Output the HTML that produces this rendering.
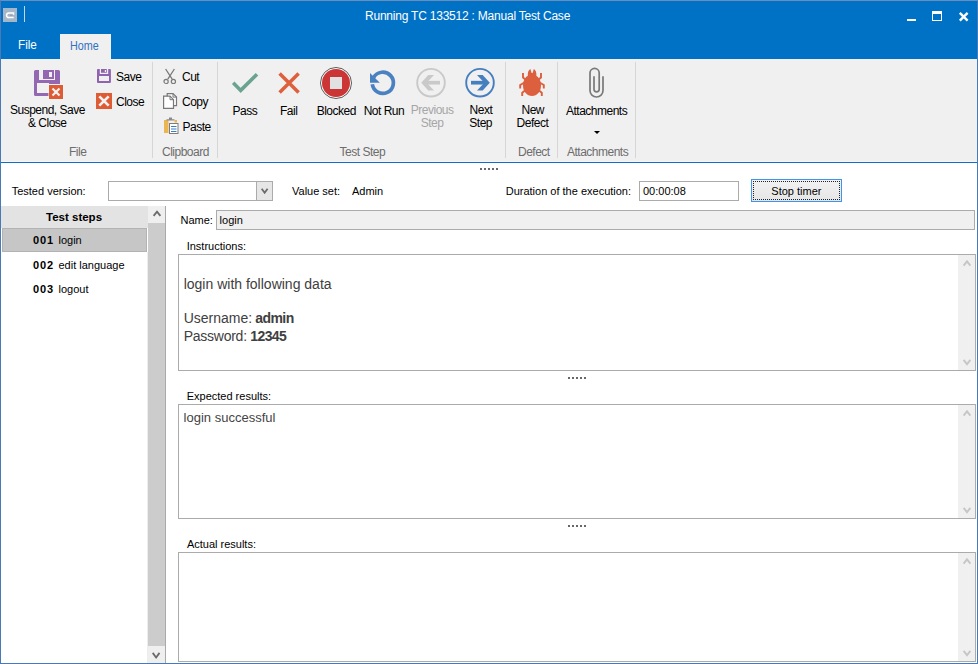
<!DOCTYPE html>
<html><head><meta charset="utf-8">
<style>
*{margin:0;padding:0;box-sizing:border-box}
html,body{width:978px;height:664px;overflow:hidden;background:#fff}
body{position:relative;font-family:"Liberation Sans",sans-serif;color:#000}
.a{position:absolute}
.t{position:absolute;white-space:nowrap;line-height:1}
svg{position:absolute;overflow:visible}
.rb{font-size:12px;letter-spacing:-0.5px;color:#000}
.gl{font-size:12px;letter-spacing:-0.5px;color:#6d6d6d}
.dis{color:#a6a6a6}
.sep{position:absolute;top:62px;width:1px;height:96px;background:#d6d6d6}
.lb{font-size:11px;color:#000}
.dots{position:absolute;width:18px;height:2px;background:repeating-linear-gradient(90deg,#686868 0 2px,transparent 2px 4px)}
.box{position:absolute;border:1px solid #ababab;background:#fff}
.vs{position:absolute;background:#f0f0f0}
</style></head><body>
<!-- window frame -->
<div class="a" style="left:0;top:0;width:978px;height:664px;border:1px solid #477ab6;border-top-color:#6a8dbb"></div>
<!-- title bar + tab row -->
<div class="a" style="left:1px;top:1px;width:976px;height:58px;background:#0072c6"></div>
<div class="a" style="left:3px;top:8px;width:14px;height:14px;background:#a6b6c9"></div>
<svg style="left:3px;top:8px" width="14" height="14"><path d="M10.7 9.6 H5.9 A2.35 2.35 0 0 1 5.9 4.9 H10.5 V6.8" fill="none" stroke="#fff" stroke-width="1.5"/><path d="M7 7.3 H9.8" stroke="#8fa1b4" stroke-width="1.1"/></svg>
<div class="a" style="left:24px;top:6px;width:1px;height:16px;background:#c2d6ec"></div>
<div class="t" style="left:365px;top:10.2px;font-size:12px;letter-spacing:-0.22px;color:#fff">Running TC 133512 : Manual Test Case</div>
<!-- window controls -->
<div class="a" style="left:907px;top:19px;width:9px;height:2px;background:#fff"></div>
<div class="a" style="left:932px;top:11px;width:10px;height:10px;border:1px solid #fff;border-top-width:3px"></div>
<svg style="left:959px;top:12px" width="10" height="10"><path d="M0.8 0.8 L8.6 8.6 M8.6 0.8 L0.8 8.6" stroke="#fff" stroke-width="2.4"/></svg>
<!-- tabs -->
<div class="t" style="left:18px;top:38.2px;font-size:13px;transform:scaleX(0.9);transform-origin:0 0;color:#fff">File</div>
<div class="a" style="left:60px;top:34px;width:51px;height:25px;background:#f0f0f0"></div>
<div class="t" style="left:69.6px;top:38.7px;font-size:13.3px;transform:scaleX(0.81);transform-origin:0 0;color:#3271c2">Home</div>
<!-- ribbon -->
<div class="a" style="left:1px;top:59px;width:976px;height:103px;background:#f0f0f0"></div>
<div class="a" style="left:1px;top:161px;width:976px;height:1px;background:#f7f7f7"></div>
<div class="a" style="left:1px;top:162px;width:976px;height:1px;background:#0b6fca"></div>
<div class="sep" style="left:152px"></div>
<div class="sep" style="left:217px"></div>
<div class="sep" style="left:505px"></div>
<div class="sep" style="left:557px"></div>
<div class="sep" style="left:635px"></div>

<!-- File group -->
<svg style="left:34px;top:70px" width="30" height="30" viewBox="0 0 30 30">
 <path d="M1.5 0 H5 V10 H21 V0 H24.5 A1.5 1.5 0 0 1 26 1.5 V14 H15 V26 H1.5 A1.5 1.5 0 0 1 0 24.5 V1.5 A1.5 1.5 0 0 1 1.5 0 Z M3 13 V23 H15 V13 Z" fill="#9467b3" fill-rule="evenodd"/>
 <path d="M9 0 H20 V9 H9 Z M15 2 V7 H18 V2 Z" fill="#9467b3" fill-rule="evenodd"/>
 <rect x="14.5" y="14.5" width="15" height="15" fill="#f4f7f8"/>
 <rect x="15" y="15" width="14" height="14" fill="#df5b34"/>
 <path d="M18.5 18.5 L25.5 25.5 M25.5 18.5 L18.5 25.5" stroke="#f3f3f3" stroke-width="2.2"/>
</svg>
<div class="t rb" style="left:10px;top:103.8px">Suspend, Save</div>
<div class="t rb" style="left:28px;top:116.8px">&amp; Close</div>
<svg style="left:97px;top:69px" width="14" height="14" viewBox="0 0 14 14">
 <path d="M0.9 0 H2.8 V5 H11.2 V0 H13 A0.9 0.9 0 0 1 13.9 0.9 V13 A0.9 0.9 0 0 1 13 13.9 H0.9 A0.9 0.9 0 0 1 0 13 V0.9 A0.9 0.9 0 0 1 0.9 0 Z M2 7 V12 H12 V7 Z" fill="#9063b0" fill-rule="evenodd"/>
 <path d="M4 0 H9.8 V3.8 H4 Z M7.8 1 V2.9 H9 V1 Z" fill="#9063b0" fill-rule="evenodd"/>
</svg>
<div class="t rb" style="left:116px;top:70.8px">Save</div>
<svg style="left:96px;top:93px" width="16" height="16" viewBox="0 0 16 16">
 <rect width="16" height="16" fill="#df5b34"/>
 <path d="M3.3 3.3 L12.7 12.7 M12.7 3.3 L3.3 12.7" stroke="#f3f3f3" stroke-width="2.6"/>
</svg>
<div class="t rb" style="left:116px;top:96.1px">Close</div>
<div class="t gl" style="left:69px;top:145.8px">File</div>
<!-- Clipboard group -->
<svg style="left:162px;top:68px" width="16" height="17" viewBox="0 0 16 17">
 <path d="M3.6 1 L10.2 11.2 M12.4 1 L5.8 11.2" stroke="#7a7a7a" stroke-width="1.3" fill="none"/>
 <circle cx="4.1" cy="13.4" r="2.1" fill="none" stroke="#7a7a7a" stroke-width="1.2"/>
 <circle cx="11.4" cy="13.4" r="2.1" fill="none" stroke="#7a7a7a" stroke-width="1.2"/>
</svg>
<div class="t rb" style="left:182px;top:70.8px">Cut</div>
<svg style="left:163px;top:93px" width="15" height="16" viewBox="0 0 15 16">
 <path d="M4.2 0.6 H10 L13.5 4.1 V12.6 H4.2 Z" fill="#fff" stroke="#787878" stroke-width="1.2"/>
 <path d="M0.6 3.2 H7 L10.5 6.7 V15.4 H0.6 Z" fill="#fff" stroke="#787878" stroke-width="1.2"/>
 <path d="M7 3.2 V6.7 H10.5" fill="none" stroke="#787878" stroke-width="1"/>
 <path d="M10 0.6 V4.1 H13.5" fill="none" stroke="#787878" stroke-width="1"/>
</svg>
<div class="t rb" style="left:182px;top:96.1px">Copy</div>
<svg style="left:163px;top:117px" width="16" height="17" viewBox="0 0 16 17">
 <rect x="1" y="3" width="4.5" height="13" fill="#ebb552"/>
 <rect x="11.5" y="3" width="2.5" height="2.5" fill="#ebb552"/>
 <path d="M3.5 2.2 H11.5 V3.6 H3.5 Z M6 0.5 H9 V2.2 H6 Z" fill="#8a8a8a"/>
 <rect x="6.5" y="6.5" width="8.5" height="10" fill="#fff" stroke="#7c7c7c" stroke-width="1"/>
 <path d="M8 9.5 H13.5 M8 12 H13.5 M8 14.5 H13.5" stroke="#3a7cc8" stroke-width="1"/>
</svg>
<div class="t rb" style="left:182.5px;top:120.8px">Paste</div>
<div class="t gl" style="left:162px;top:145.8px">Clipboard</div>
<!-- Test Step group -->
<svg style="left:226px;top:64px" width="40" height="36">
 <path d="M7.2 18.8 L14.7 26.4 L31 10.3" fill="none" stroke="#6aa48f" stroke-width="3.6"/>
</svg>
<div class="t rb" style="left:232.5px;top:105.2px">Pass</div>
<svg style="left:270px;top:64px" width="40" height="36">
 <path d="M9.6 9.6 L28.6 28.6 M28.6 9.6 L9.6 28.6" fill="none" stroke="#df5f3c" stroke-width="3.5"/>
</svg>
<div class="t rb" style="left:280px;top:105.2px">Fail</div>
<svg style="left:314px;top:62px" width="44" height="44">
 <circle cx="22" cy="21" r="15.5" fill="#fff" stroke="#5a5a5a" stroke-width="1"/>
 <circle cx="22" cy="21" r="14" fill="#cb3535"/>
 <rect x="16" y="15" width="12" height="12" fill="#e1e1e1"/>
</svg>
<div class="t rb" style="left:316.7px;top:105.2px">Blocked</div>
<svg style="left:360px;top:62px" width="44" height="44">
 <path d="M12.30 22.28 A10.6 10.6 0 1 0 13.62 15.50" fill="none" stroke="#4a82c1" stroke-width="3.7"/>
 <path d="M10 11 L10 20.7 L19.8 20.7 Z" fill="#4a82c1"/>
</svg>
<div class="t rb" style="left:363.7px;top:105.2px">Not Run</div>
<svg style="left:410px;top:62px" width="44" height="44">
 <circle cx="21" cy="20.7" r="13.8" fill="none" stroke="#c9c9c9" stroke-width="1.9"/>
 <path d="M15 20.7 H30" stroke="#c9c9c9" stroke-width="3.7"/>
 <path d="M24 12.9 H18.3 L11.2 20.7 L18.3 28.5 H24 L16.7 20.7 Z" fill="#c9c9c9"/>
</svg>
<div class="t rb dis" style="left:410.8px;top:103.8px">Previous</div>
<div class="t rb dis" style="left:420.7px;top:116.8px">Step</div>
<svg style="left:459px;top:62px" width="44" height="44">
 <circle cx="21" cy="20.7" r="13.8" fill="none" stroke="#457fbf" stroke-width="1.9"/>
 <path d="M12 20.7 H27" stroke="#457fbf" stroke-width="3.7"/>
 <path d="M18 12.9 H23.7 L30.8 20.7 L23.7 28.5 H18 L25.3 20.7 Z" fill="#457fbf"/>
</svg>
<div class="t rb" style="left:469.6px;top:103.8px">Next</div>
<div class="t rb" style="left:469.3px;top:116.8px">Step</div>
<div class="t gl" style="left:339.6px;top:145.8px">Test Step</div>
<!-- Defect group -->
<svg style="left:512px;top:64px" width="40" height="40" viewBox="0 0 40 40">
 <g fill="#dc5f3e">
  <path d="M15.9 12.5 C15.4 8.2 16.6 5.6 18.4 4.9 L19.6 8.9 H20.6 L21.8 4.9 C23.6 5.6 24.8 8.2 24.3 12.5 Z"/>
  <path d="M20 10.8 C25.5 10.8 29 15.5 29 21.5 C29 27.5 25 32 20 32 C15 32 11 27.5 11 21.5 C11 15.5 14.5 10.8 20 10.8 Z"/>
 </g>
 <g fill="none" stroke="#dc5f3e" stroke-width="1.9">
  <path d="M11 9 V13.6 L14 16"/><path d="M29 9 V13.6 L26 16"/>
  <path d="M12.5 18.5 L8.2 21 V24.5"/><path d="M27.5 18.5 L31.8 21 V24.5"/>
  <path d="M13 26.5 L10.2 28.8 V32"/><path d="M27 26.5 L29.8 28.8 V32"/>
 </g>
</svg>
<div class="t rb" style="left:521.5px;top:103.8px">New</div>
<div class="t rb" style="left:516.6px;top:116.8px">Defect</div>
<div class="t gl" style="left:518px;top:145.8px">Defect</div>
<!-- Attachments group -->
<svg style="left:580px;top:64px" width="32" height="40" viewBox="0 0 32 40">
 <path d="M23 12.3 V26.5 A6.5 6.5 0 0 1 10 26.5 V9 A4.6 4.6 0 0 1 19.2 9 V25.3 A2.6 2.6 0 0 1 14 25.3 V12.3" fill="none" stroke="#797979" stroke-width="1.7"/>
</svg>
<div class="t rb" style="left:566px;top:105.2px">Attachments</div>
<svg style="left:594px;top:131px" width="7" height="4"><path d="M0 0 H6 L3 3 Z" fill="#000"/></svg>
<div class="t gl" style="left:567px;top:145.8px">Attachments</div>

<!-- grip -->
<div class="dots" style="left:480px;top:168px"></div>
<!-- top form row -->
<div class="t lb" style="left:11.7px;top:185.7px">Tested version:</div>
<div class="box" style="left:108px;top:181px;width:165px;height:20px"></div>
<div class="a" style="left:256px;top:182px;width:16px;height:18px;background:#e6e6e6;border-left:1px solid #ababab"></div>
<svg style="left:261px;top:188px" width="8" height="7"><path d="M0.7 0.8 L3.65 4.8 L6.6 0.8" fill="none" stroke="#6a6a6a" stroke-width="1.8"/></svg>
<div class="t lb" style="left:292px;top:185.6px">Value set:</div>
<div class="t lb" style="left:352px;top:185.6px">Admin</div>
<div class="t lb" style="left:505.7px;top:185.7px">Duration of the execution:</div>
<div class="box" style="left:639px;top:181px;width:100px;height:20px"></div>
<div class="t lb" style="left:643px;top:186px">00:00:08</div>
<div class="a" style="left:751px;top:179px;width:91px;height:23px;border:1px solid #3c96f0;background:linear-gradient(#f2f2f2,#e6e6e6)"></div>
<div class="a" style="left:753px;top:181px;width:87px;height:19px;border:1px dotted #222"></div>
<div class="t lb" style="left:771.3px;top:185.7px">Stop timer</div>
<!-- left list -->
<div class="a" style="left:1px;top:206px;width:147px;height:22px;background:#e3e3e3"></div>
<div class="t" style="left:46px;top:212.1px;font-size:11.5px;font-weight:bold">Test steps</div>
<div class="a" style="left:2px;top:228px;width:145px;height:24px;background:#c6c6c6;border:1px solid #b3b3b3"></div>
<div class="t" style="left:33px;top:235.4px;font-size:11px;font-weight:bold;letter-spacing:0.9px">001</div>
<div class="t lb" style="left:58.5px;top:235.4px">login</div>
<div class="t" style="left:33px;top:259.7px;font-size:11px;font-weight:bold;letter-spacing:0.9px">002</div>
<div class="t lb" style="left:58.5px;top:259.7px">edit language</div>
<div class="t" style="left:33px;top:283.7px;font-size:11px;font-weight:bold;letter-spacing:0.9px">003</div>
<div class="t lb" style="left:58.5px;top:283.7px">logout</div>
<div class="a" style="left:147px;top:252px;width:1px;height:411px;background:#ededed"></div>
<div class="a" style="left:148px;top:206px;width:17px;height:457px;background:#cccccc"></div>
<div class="a" style="left:165px;top:206px;width:1px;height:457px;background:#a9a9a9"></div>
<div class="a" style="left:148px;top:206px;width:17px;height:17px;background:#efefef"></div>
<svg style="left:152.5px;top:210px" width="9" height="7"><path d="M0.6 5.9 L4 1.6 L7.4 5.9" fill="none" stroke="#6a6a6a" stroke-width="1.8"/></svg>
<div class="a" style="left:148px;top:646px;width:17px;height:17px;background:#efefef"></div>
<svg style="left:152px;top:651.5px" width="9" height="7"><path d="M0.7 0.9 L4.1 5.5 L7.5 0.9" fill="none" stroke="#6a6a6a" stroke-width="1.8"/></svg>
<!-- right panel -->
<div class="t lb" style="left:180.5px;top:214.9px">Name:</div>
<div class="box" style="left:216px;top:210px;width:759px;height:20px;background:#f0f0f0"></div>
<div class="t lb" style="left:219.6px;top:214.9px">login</div>
<div class="t lb" style="left:186.7px;top:240.9px">Instructions:</div>
<div class="box" style="left:178px;top:254px;width:798px;height:117px"></div>
<div class="vs" style="left:958px;top:255px;width:17px;height:115px"></div>
<div class="t" style="left:183.7px;top:276.9px;font-size:14px;color:#404040">login with following data</div>
<div class="t" style="left:183.7px;top:310.8px;font-size:14px;color:#404040">Username:<b style="margin-left:3px;letter-spacing:-0.55px">admin</b></div>
<div class="t" style="left:183.7px;top:329.1px;font-size:14px;letter-spacing:-0.25px;color:#404040">Password:<b style="margin-left:3.5px;letter-spacing:-0.6px">12345</b></div>
<div class="dots" style="left:568px;top:377px"></div>
<div class="t lb" style="left:186.7px;top:391.1px">Expected results:</div>
<div class="box" style="left:178px;top:404px;width:798px;height:115px"></div>
<div class="vs" style="left:958px;top:405px;width:17px;height:113px"></div>
<div class="t" style="left:183.6px;top:410.8px;font-size:13px;color:#444">login successful</div>
<div class="dots" style="left:568px;top:525px"></div>
<div class="t lb" style="left:186.9px;top:538.9px">Actual results:</div>
<div class="box" style="left:178px;top:552px;width:798px;height:110px"></div>
<div class="vs" style="left:958px;top:553px;width:17px;height:108px"></div>
<svg style="left:962.5px;top:260px" width="9" height="7"><path d="M0.6 5.7 L4 1.3 L7.4 5.7" fill="none" stroke="#c6c6c6" stroke-width="1.9"/></svg>
<svg style="left:962.5px;top:359px" width="9" height="7"><path d="M0.6 0.8 L4 5.2 L7.4 0.8" fill="none" stroke="#c6c6c6" stroke-width="1.9"/></svg>
<svg style="left:962.5px;top:410px" width="9" height="7"><path d="M0.6 5.7 L4 1.3 L7.4 5.7" fill="none" stroke="#c6c6c6" stroke-width="1.9"/></svg>
<svg style="left:962.5px;top:507px" width="9" height="7"><path d="M0.6 0.8 L4 5.2 L7.4 0.8" fill="none" stroke="#c6c6c6" stroke-width="1.9"/></svg>
<svg style="left:962.5px;top:558px" width="9" height="7"><path d="M0.6 5.7 L4 1.3 L7.4 5.7" fill="none" stroke="#c6c6c6" stroke-width="1.9"/></svg>
<svg style="left:962.5px;top:650px" width="9" height="7"><path d="M0.6 0.8 L4 5.2 L7.4 0.8" fill="none" stroke="#c6c6c6" stroke-width="1.9"/></svg>
</body></html>
